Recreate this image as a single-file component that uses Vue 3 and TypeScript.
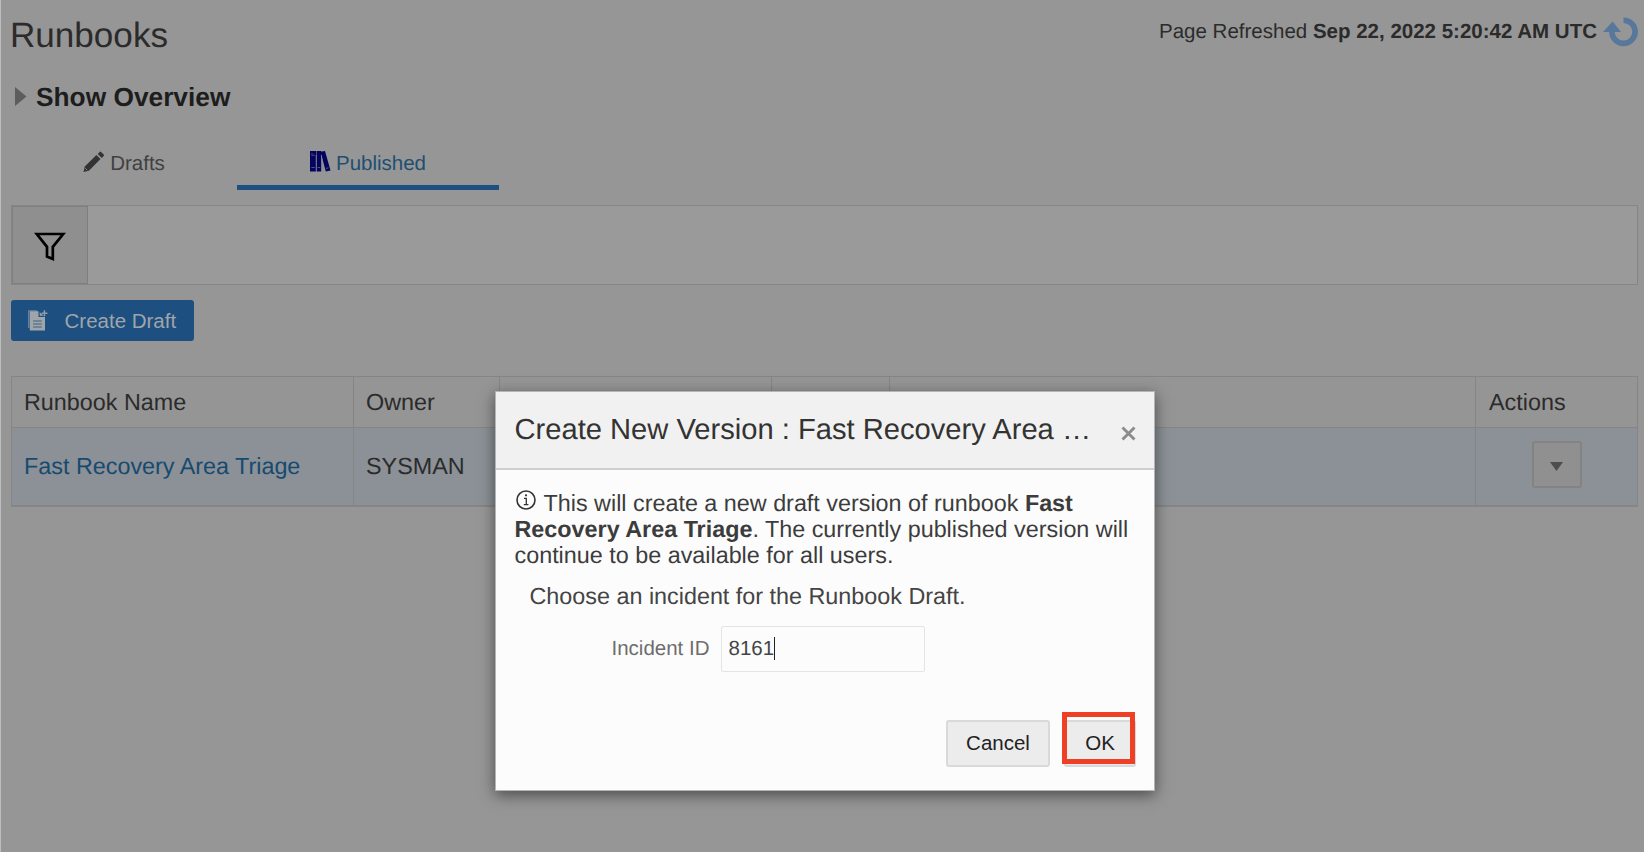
<script setup lang="ts">
import { ref } from 'vue'

interface Runbook {
  name: string
  owner: string
}

const headers: string[] = ['Runbook Name', 'Owner', '', '', '', 'Actions']
const runbooks: Runbook[] = [{ name: 'Fast Recovery Area Triage', owner: 'SYSMAN' }]
const incidentId = ref<string>('8161')
</script>

<template>
  <div class="page">
    <header class="top">
      <h1>Runbooks</h1>
      <div class="refreshed">
        <span>Page Refreshed <b>Sep 22, 2022 5:20:42 AM UTC</b></span>
        <svg class="reload" width="36" height="32" viewBox="0 0 36 32">
          <path d="M20.500 4.200A11.600 11.600 0 1 1 8.900 15.800" fill="none" stroke="#58789b" stroke-width="5.600" />
          <path d="M0 16 9.600 5.500 18 16Z" fill="#58789b" />
        </svg>
      </div>
    </header>

    <div class="overview">
      <svg width="12" height="19" viewBox="0 0 12 19"><path d="M0 0 11.500 9.500 0 19Z" fill="#5d5d5d" /></svg>
      <h2>Show Overview</h2>
    </div>

    <nav class="tabs">
      <div class="tab">
        <svg width="22" height="22" viewBox="0 0 22 22" fill="#333">
          <path d="M.500 21 1.800 15.600 13.400 4 17.500 8.100 5.900 19.700Z" />
          <path d="M14.700 2.900 16.700.900Q17.400.300 18.100 1L20.700 3.600Q21.400 4.300 20.700 5L18.800 7Z" />
          <path d="M2.300 17.300 4.200 19.200" stroke="#969696" stroke-width=".9" />
        </svg>
        <span>Drafts</span>
      </div>
      <div class="tab active">
        <svg width="21" height="21" viewBox="0 0 21 21">
          <path d="M0 0H6V20.500H0ZM6.500 0H11.200V20.500H6.500ZM10.500.700 15 0 20.500 19.500 15.800 20.500Z" fill="#04045c" />
          <path d="M1.300 4.200H4.800M1.300 16.500H4.800M7.700 16.500H10.200M1.300 2.600H2.600M16 17.400 18.500 16.800" fill="none" stroke="#66668c" stroke-width=".8" />
          <path d="M6.250 4V20.500M11.300 4 13.500 20.500" stroke="#8888a0" stroke-width=".8" />
        </svg>
        <span>Published</span>
      </div>
    </nav>

    <div class="filter">
      <div class="filter-btn">
        <svg width="32" height="30" viewBox="0 0 32 30">
          <path d="M2.800 2H29.200L18.800 14.800V27L13 24.500V14.800Z" fill="none" stroke="#000" stroke-width="2.700" />
        </svg>
      </div>
    </div>

    <button class="create">
      <svg width="20" height="21" viewBox="0 0 20 21">
        <path d="M.700 18V.800H9" fill="none" stroke="#6885a0" stroke-width="1.300" />
        <path d="M1.800 1.200H10.500V7H17V20.500H1.800Z" fill="#a0a5a9" />
        <path d="M11.700 2.200V5.800H15.500Z" fill="#a0a5a9" />
        <path d="M5 11H13.800M5 14H13.800M5 17H13.800" stroke="#3f637f" stroke-width="1" />
        <path d="M16.400.300V6.200M13.500 3.200H19.400" stroke="#8c9cab" stroke-width="1.500" />
      </svg>
      <span>Create Draft</span>
    </button>

    <div class="grid">
      <div v-for="(h, i) in headers" :key="i" class="cell head">{{ h }}</div>
      <template v-for="r in runbooks" :key="r.name">
        <div class="cell body link">{{ r.name }}</div>
        <div class="cell body">{{ r.owner }}</div>
        <div class="cell body"></div>
        <div class="cell body"></div>
        <div class="cell body"></div>
        <div class="cell body action">
          <div class="menu-btn">
            <svg width="13" height="9" viewBox="0 0 13 9"><path d="M0 0H13L6.500 9Z" fill="#4b4d4f" /></svg>
          </div>
        </div>
      </template>
    </div>

    <section class="dialog">
      <div class="dialog-head">
        <span class="title">Create New Version : Fast Recovery Area …</span>
        <svg width="15" height="15" viewBox="0 0 15 15"><path d="M1.500 1.500 13.500 13.500M13.500 1.500 1.500 13.500" stroke="#8c8c8c" stroke-width="2.900" /></svg>
      </div>
      <div class="dialog-body">
        <p class="info">
          <svg width="20" height="20" viewBox="0 0 20 20">
            <circle cx="10" cy="10" r="9" fill="none" stroke="#333" stroke-width="1.600" />
            <path d="M8 8.300H10.300V14.500M7.800 14.700H12.400" fill="none" stroke="#333" stroke-width="1.300" />
            <circle cx="10" cy="5.300" r="1.100" fill="#333" />
          </svg>
          <span>This will create a new draft version of runbook <b>Fast</b></span><br />
          <span><b>Recovery Area Triage</b>. The currently published version will</span><br />
          <span>continue to be available for all users.</span>
        </p>
        <p class="choose">Choose an incident for the Runbook Draft.</p>
        <div class="field">
          <span class="label">Incident ID</span>
          <div class="input"><span>{{ incidentId }}</span><i class="caret"></i></div>
        </div>
        <div class="buttons">
          <button class="btn cancel">Cancel</button>
          <button class="btn ok">OK<i class="highlight"></i></button>
        </div>
      </div>
    </section>
  </div>
</template>

<style>
body { margin: 0; overflow: hidden; }
</style>

<style scoped>
.page {
  position: relative;
  box-sizing: border-box;
  width: 1644px;
  height: 852px;
  padding: 0 5px 0 10px;
  border-left: 1px solid #bdbdbd;
  background: #969696;
  color: #2b2b2b;
  font-family: "Liberation Sans", Arial, sans-serif;
  text-rendering: geometricPrecision;
  overflow: hidden;
}
.page * { box-sizing: border-box; }
h1, h2, p { margin: 0; }
button { font-family: inherit; }
.top { display: flex; justify-content: space-between; height: 72px; }
h1 { font-size: 35.1px; line-height: 40px; font-weight: 400; margin-top: 16px; margin-left: -1px; white-space: nowrap; }
.refreshed { display: flex; gap: 6px; font-size: 20.5px; line-height: 24px; padding-top: 20px; white-space: nowrap; }
.reload { margin-top: -4px; margin-right: 0; }
.overview { display: flex; align-items: center; gap: 9px; height: 48px; padding-left: 4px; }
h2 { font-size: 26.3px; line-height: 30px; color: #1d1d1d; padding-top: 1px; }
.tabs { display: flex; height: 70px; }
.tab { width: 226px; display: flex; justify-content: center; gap: 5px; padding-top: 31px; font-size: 20.5px; line-height: 26px; color: #404040; }
.tab svg { margin-top: 0; }
.active { width: 262px; border-bottom: 5px solid #1d5080; color: #204f72; }
.filter { display: flex; height: 80px; margin-top: 15px; border: 1px solid #868686; background: #9a9a9a; width: 1627px; }
.filter-btn { width: 76px; border: 1px solid #7f7f7f; background: #8f8f8f; display: flex; align-items: center; justify-content: center; padding-top: 3px; }
.create { display: flex; align-items: center; gap: 17px; width: 183px; height: 41px; margin-top: 15px; margin-left: -0.5px; padding: 0 0 0 17px; border: 0; border-radius: 3px; background: #1d5080; color: #a0a5a9; font-size: 20.5px; white-space: nowrap; }
.grid { display: grid; grid-template-columns: 342px 146px 272px 118px 586px 161px; grid-template-rows: 51px 77px; margin-top: 35px; width: 1627px; border: 1px solid #858585; border-bottom-width: 2px; }
.cell { border-right: 1px solid #858585; padding-left: 12px; font-size: 23.35px; display: flex; align-items: center; white-space: nowrap; }
.head { border-bottom: 1px solid #858585; background: #959595; }
.body { background: #8b9196; }
.link { color: #184a70; }
.action { justify-content: center; padding: 0 0 4px; }
.cell:nth-child(6n) { border-right: 0; }
.head:nth-child(6n) { padding-left: 13px; }
.menu-btn { width: 50px; height: 47px; border: 2px solid #838383; border-radius: 3px; background: #909090; display: flex; align-items: center; justify-content: center; padding-top: 3px; }
.dialog { position: absolute; left: 493.5px; top: 391px; width: 660.5px; height: 400px; border: 1px solid #b5b5b5; background: #fcfcfc; box-shadow: 0 4px 14px rgba(0, 0, 0, 0.5); color: #333; white-space: nowrap; }
.dialog-head { display: flex; justify-content: space-between; height: 78px; padding: 21px 18px 0 19px; background: #f1f1f1; border-bottom: 2px solid #cfcfcf; }
.title { font-size: 29.15px; line-height: 34px; }
.dialog-head svg { margin-top: 13px; }
.dialog-body { padding: 20px 18px 0 19px; font-size: 23.35px; }
.info { line-height: 26.2px; color: #3c3c3c; }
.info svg { vertical-align: 1px; margin-right: 8px; margin-left: 1px; }
.choose { padding-left: 15px; margin-top: 14px; line-height: 27px; color: #444; }
.field { display: flex; align-items: center; margin-top: 16px; padding-left: 97px; font-size: 20.5px; }
.label { color: #6d6d6d; width: 109px; }
.input { width: 204px; height: 46px; border: 1.5px solid #e4e4e4; border-radius: 2px; padding-left: 7px; display: flex; align-items: center; color: #444; }
.caret { width: 1px; height: 23px; background: #222; }
.buttons { display: flex; justify-content: flex-end; gap: 14px; margin-top: 48px; }
.btn { position: relative; height: 47px; padding: 0; border: 2px solid #d9d9d9; border-radius: 3px; background: #ececec; color: #222; font-size: 20.5px; }
.cancel { width: 104px; }
.ok { width: 72px; }
.highlight { position: absolute; left: -4px; top: -10px; width: 73px; height: 52px; border: 5px solid #ee4027; }
</style>
